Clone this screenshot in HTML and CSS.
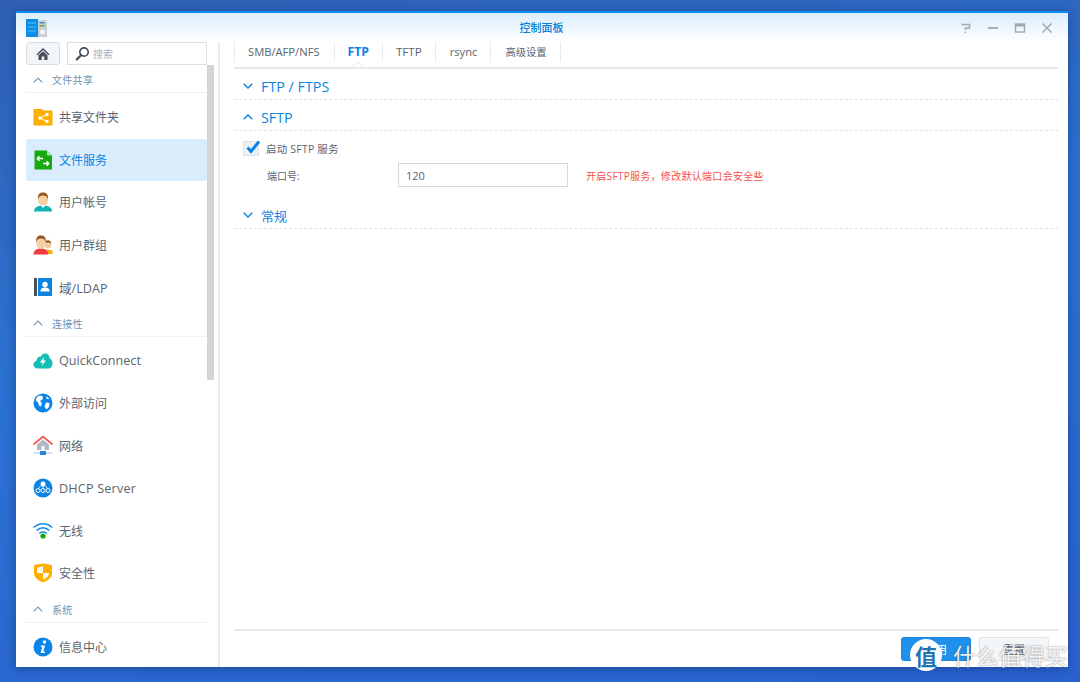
FILE: index.html
```html
<!DOCTYPE html>
<html lang="zh-CN">
<head>
<meta charset="utf-8">
<title>控制面板</title>
<link rel="stylesheet" href="styles.css">
</head>
<body>
<div class="window">
  <header class="titlebar">
    <svg class="app-icon" width="21" height="18" viewBox="0 0 21 18"><rect width="12" height="18" fill="#0a8fe6"/><path d="M2 4h8M2 8h8M2 12h8" stroke="#5cc0f5" stroke-width="1"/><rect x="12" y="1" width="9" height="17" fill="#c9ced3"/><rect x="13.500" y="3" width="5" height="1.500" fill="#3b8fd0"/><rect x="13.500" y="6" width="5" height="1.500" fill="#5aa84a"/><circle cx="16.500" cy="13" r="2.500" fill="#f2f4f6"/></svg>
    <h1 class="title">控制面板</h1>
    <div class="win-controls">
      <svg width="12" height="12" viewBox="0 0 12 12"><path d="M1.500 2.500H9.500V6H5.500V8M5.500 9.500V11" fill="none" stroke="#a3a8ad" stroke-width="1.600"/></svg>
      <svg width="12" height="12" viewBox="0 0 12 12"><path d="M1 6H11" stroke="#a3a8ad" stroke-width="1.800"/></svg>
      <svg width="12" height="12" viewBox="0 0 12 12"><rect x="1.500" y="2" width="9" height="8" fill="none" stroke="#a3a8ad" stroke-width="1.400"/><rect x="1" y="2" width="10" height="2.500" fill="#a3a8ad"/></svg>
      <svg width="12" height="12" viewBox="0 0 12 12"><path d="M1.500 1.500L10.500 10.500M10.500 1.500L1.500 10.500" stroke="#a3a8ad" stroke-width="1.500"/></svg>
    </div>
  </header>
  <div class="body">
    <aside class="sidebar">
      <div class="tools">
        <button class="home" type="button" aria-label="主页">
          <svg width="14" height="14" viewBox="0 0 14 14"><path d="M7 1L0.500 7.200L1.500 8.200L7 3L12.500 8.200L13.500 7.200Z" fill="#46505c"/><path d="M2.500 8.200L7 4.200L11.500 8.200V13H8.300V9.500H5.700V13H2.500Z" fill="#46505c"/></svg>
        </button>
        <div class="search">
          <svg width="15" height="15" viewBox="0 0 15 15"><circle cx="9" cy="6" r="4.200" fill="none" stroke="#46505c" stroke-width="1.700"/><path d="M6 9.200L1.800 13.400" stroke="#46505c" stroke-width="2.200" stroke-linecap="round"/></svg>
          <span>搜索</span>
        </div>
      </div>
      <div class="nav">
        <div class="nav-head"><svg class="chev-s" width="10" height="6" viewBox="0 0 10 6"><path d="M.7 5.300L5 1L9.300 5.300" fill="none" stroke="#6f97b8" stroke-width="1.100"/></svg>文件共享</div>
        <div class="nav-item"><svg width="20" height="18" viewBox="0 0 20 18"><path d="M1 1.500H9L10.500 3H19V17H1Z" fill="#ffb000" stroke="#f7a500"/><circle cx="7" cy="10" r="1.700" fill="#fff"/><circle cx="14" cy="6.500" r="1.700" fill="#fff"/><circle cx="14" cy="13.500" r="1.700" fill="#fff"/><path d="M7 10L14 6.500M7 10L14 13.500" stroke="#fff"/></svg>共享文件夹</div>
        <div class="nav-item active"><svg width="20" height="20" viewBox="0 0 20 20"><path d="M1.500 0.500H14L19 5.500V19.500H1.500Z" fill="#17a90f"/><path d="M14 .5V5.500H19Z" fill="#a6e39c"/><path d="M4 8.500H10M4 8.500L6.500 6.200M4 8.500L6.500 10.800M16 13.500H10M16 13.500L13.500 11.200M16 13.500L13.500 15.800" fill="none" stroke="#fff" stroke-width="1.500"/></svg>文件服务</div>
        <div class="nav-item"><svg width="20" height="20" viewBox="0 0 20 20"><path d="M1 19.500C1 15.500 4 14.500 7.500 13.500H12.500C16 14.500 19 15.500 19 19.500Z" fill="#11b3b5"/><ellipse cx="10" cy="7.500" rx="5" ry="6.500" fill="#f6cfa6"/><path d="M7.500 13H12.500L10 16Z" fill="#fff"/><path d="M5 7C4.500 2 7 .5 10 .5C13 .5 15.500 2 15 7C14 4.500 12.500 3.500 10 3.500C7.500 3.500 6 4.500 5 7Z" fill="#95561f"/></svg>用户帐号</div>
        <div class="nav-item"><svg width="20" height="20" viewBox="0 0 20 20"><ellipse cx="15" cy="9" rx="3.300" ry="4.500" fill="#f3c99e"/><path d="M12 8C12 4.500 18 4.500 18 8.500C16 7 14 7 12 8Z" fill="#6b4a25"/><path d="M13 14.500L19.500 15.500V19H13Z" fill="#f7a90c"/><path d="M0.500 19.500C.5 15.500 3 14.500 6 13.500H10C13 14.500 15 15.500 15 19.500Z" fill="#ed3b3b"/><ellipse cx="8" cy="7.500" rx="4.800" ry="6.300" fill="#f6cfa6"/><path d="M3.200 7C2.800 2 5 .5 8 .5C11 .5 13.200 2 12.800 7C12 4.500 10.500 3.500 8 3.500C5.500 3.500 4 4.500 3.200 7Z" fill="#95561f"/></svg>用户群组</div>
        <div class="nav-item latin"><svg width="20" height="20" viewBox="0 0 20 20"><rect x="1" y="1" width="3" height="18" fill="#46505c"/><rect x="5" y="1" width="14" height="18" fill="#0a84e0"/><circle cx="12" cy="7.500" r="2.700" fill="#fff"/><path d="M7.500 14.500C7.500 11.500 9 11 11 10.500H13C15 11 16.500 11.500 16.500 14.500Z" fill="#fff"/></svg>域/LDAP</div>
        <div class="nav-head"><svg class="chev-s" width="10" height="6" viewBox="0 0 10 6"><path d="M.7 5.300L5 1L9.300 5.300" fill="none" stroke="#6f97b8" stroke-width="1.100"/></svg>连接性</div>
        <div class="nav-item latin"><svg width="20" height="16" viewBox="0 0 20 16"><path d="M5 15.500C2 15.500 .5 13.500 .5 11.500C.5 9.500 2 8 3.500 7.800C4 4 6.500 3 8 3.500C9 1 11 .5 12.500 .5C15 .5 16.500 2.500 16.500 5C18.500 6 19.500 8.500 19.500 10.500C19.500 13.500 17.500 15.500 15 15.500Z" fill="#12bfb2"/><path d="M11 4L7 9.500H9.700L8.500 13L13 7.500H10.300Z" fill="#fff"/></svg>QuickConnect</div>
        <div class="nav-item"><svg width="20" height="20" viewBox="0 0 20 20"><circle cx="10" cy="10" r="9.500" fill="#0a84e8"/><path d="M7 2.500C4.500 3 3 5 2.800 7.500L5 9.500L6 12.500L8 13.500L9 10L7 8L9.500 6.500L10 3.500ZM13 9.500L16.500 10L16 14L13.500 16.500L11.500 13.500ZM13.500 3L16.500 6H13.500Z" fill="#fff"/></svg>外部访问</div>
        <div class="nav-item"><svg width="20" height="20" viewBox="0 0 20 20"><path d="M.5 8.500L10 .5L19.500 8.500" fill="none" stroke="#f4564e" stroke-width="1.700"/><path d="M4 8.500L10 3.500L16 8.500V14H4Z" fill="#b1bac4"/><rect x="8.500" y="10" width="3" height="4" fill="#fff"/><path d="M1 17H19" stroke="#9bc5ea" stroke-width="1"/><rect x="7" y="15" width="6" height="4" fill="#1e88e5"/></svg>网络</div>
        <div class="nav-item latin wide"><svg width="20" height="20" viewBox="0 0 20 20"><circle cx="10" cy="10" r="9.500" fill="#0d84e4"/><circle cx="10" cy="6" r="2.500" fill="#fff"/><circle cx="5" cy="12.500" r="2" fill="none" stroke="#fff"/><circle cx="10" cy="12.500" r="2" fill="none" stroke="#fff"/><circle cx="15" cy="12.500" r="2" fill="none" stroke="#fff"/><path d="M10 8V10.500M7.500 8L5.500 10.500M12.500 8L14.500 10.500" stroke="#fff" stroke-width=".8"/></svg>DHCP Server</div>
        <div class="nav-item"><svg width="20" height="16" viewBox="0 0 20 16"><path d="M.7 4.500C6 -.5 14 -.5 19.300 4.500M3.500 7.500C7.500 4 12.500 4 16.500 7.500M6.300 10.300C8.800 8.500 11.200 8.500 13.700 10.300" fill="none" stroke="#0f8ae8" stroke-width="1.500"/><circle cx="10" cy="13" r="2.600" fill="#18a80f"/></svg>无线</div>
        <div class="nav-item"><svg width="20" height="20" viewBox="0 0 20 20"><path d="M1 2L10 .5L19 2V10C19 15 14 18 10 19.500C6 18 1 15 1 10Z" fill="#ffae00"/><path d="M10 3.500V10H4V4.500ZM10 10H16V10.500C15.500 13.500 13 15.300 10 16.500Z" fill="#fff"/></svg>安全性</div>
        <div class="nav-head"><svg class="chev-s" width="10" height="6" viewBox="0 0 10 6"><path d="M.7 5.300L5 1L9.300 5.300" fill="none" stroke="#6f97b8" stroke-width="1.100"/></svg>系统</div>
        <div class="nav-item"><svg width="20" height="20" viewBox="0 0 20 20"><circle cx="10" cy="10" r="9.500" fill="#0a84e8"/><circle cx="11.500" cy="5" r="1.700" fill="#fff"/><path d="M8 8.500H12L10.300 14.500H12L11.500 16H7.500L9.300 10H7.700Z" fill="#fff"/></svg>信息中心</div>
      </div>
      <div class="scrollbar"></div>
    </aside>
    <main class="main">
      <nav class="tabs">
        <span class="tab tab-first">SMB/AFP/NFS</span>
        <span class="tab current">FTP<svg class="caret" width="10" height="5" viewBox="0 0 10 5"><path d="M0 5L5 0L10 5" fill="#fff" stroke="#e2e5e8"/></svg></span>
        <span class="tab tab-wide">TFTP</span>
        <span class="tab tab-pad">rsync</span>
        <span class="tab tab-pad tab-cjk">高级设置</span>
      </nav>
      <section class="panel">
        <h2 class="sec sec-latin"><svg width="10" height="6" viewBox="0 0 10 6"><path d="M.7 .7L5 5L9.300 .7" fill="none" stroke="#0a84e0" stroke-width="1.400"/></svg>FTP / FTPS</h2>
        <h2 class="sec sec-latin"><svg width="10" height="6" viewBox="0 0 10 6"><path d="M.7 5.300L5 1L9.300 5.300" fill="none" stroke="#0a84e0" stroke-width="1.400"/></svg>SFTP</h2>
        <div class="check-row">
          <span class="check"><svg width="17" height="16" viewBox="0 0 17 16"><path d="M3.500 7.500L7 11.500L15 1.500" fill="none" stroke="#0a84e8" stroke-width="3"/></svg></span>
          <span>启动 SFTP 服务</span>
        </div>
        <div class="port-row">
          <label class="port-label">端口号:</label>
          <div class="port-input">120</div>
          <span class="note">开启SFTP服务，修改默认端口会安全些</span>
        </div>
        <h2 class="sec sec-last"><svg width="10" height="6" viewBox="0 0 10 6"><path d="M.7 .7L5 5L9.300 .7" fill="none" stroke="#0a84e0" stroke-width="1.400"/></svg>常规</h2>
      </section>
      <footer class="footer">
        <button class="btn primary" type="button">应用</button>
        <button class="btn" type="button">重置</button>
      </footer>
    </main>
  </div>
</div>
<div class="watermark"><span class="wm-badge">值</span><span class="wm-text">什么值得买</span></div>
</body>
</html>
```
FILE: styles.css
```css
* { box-sizing: border-box; }
html, body { margin: 0; height: 100%; }
body {
  width: 1080px;
  height: 682px;
  overflow: hidden;
  padding: 11px 12px 15px 16px;
  background: linear-gradient(170deg, #2f60b4 0%, #2b72d2 45%, #2a62d0 100%);
  font-family: "Open Sans", "Noto Sans CJK SC", sans-serif;
  font-size: 12px;
  color: #5a6470;
}
.window {
  height: 656px;
  display: flex;
  flex-direction: column;
  background: #fff;
  border-top: 2px solid #0a8cf0;
  box-shadow: 0 2px 10px rgba(10, 40, 100, .45);
}
.titlebar {
  height: 29px;
  flex: none;
  display: flex;
  align-items: center;
  padding: 0 15px 0 10px;
  background: linear-gradient(#dcedfb, #fff);
}
.app-icon { flex: none; }
.title {
  flex: 1;
  margin: 0 0 2px;
  text-align: center;
  font-size: 11px;
  font-weight: 500;
  color: #0a7fd8;
  padding-left: 76px;
}
.win-controls { display: flex; gap: 15px; }
.body { flex: 1; min-height: 0; display: flex; }
.sidebar {
  position: relative;
  width: 204px;
  flex: none;
  padding-left: 10px;
  border-right: 2px solid #e8ebee;
  overflow: hidden;
}
.tools { display: flex; gap: 7px; width: 181px; height: 23px; }
.home {
  width: 34px;
  height: 23px;
  padding: 0;
  display: flex;
  align-items: center;
  justify-content: center;
  background: #f3f6f9;
  border: 1px solid #d7dde4;
  border-radius: 3px;
}
.search {
  flex: 1;
  display: flex;
  align-items: center;
  gap: 3px;
  padding-left: 7px;
  border: 1px solid #d9dfe6;
  color: #a9afb6;
  font-size: 10px;
}
.nav { width: 181px; }
.nav-head {
  height: 28px;
  margin-bottom: 3px;
  padding: 2px 0 0 7px;
  display: flex;
  align-items: center;
  gap: 9px;
  border-bottom: 1px solid #eef0f2;
  font-size: 10px;
  letter-spacing: .3px;
  color: #6b93b5;
}
.nav-item {
  height: 42.5px;
  display: flex;
  align-items: center;
  padding-left: 7px;
  border-radius: 3px;
  font-size: 12px;
  position: relative;
}
.nav-item.latin { font-size: 12.600px; }
.nav-item.wide { letter-spacing: .2px; }
.nav-item svg { margin-right: 6px; flex: none; width: 20px; }
.nav-item.active { background: #d9edfd; color: #0a84e0; }
.scrollbar {
  position: absolute;
  left: 191px;
  top: 23px;
  width: 7px;
  height: 315px;
  background: #d3d4d6;
}
.main {
  flex: 1;
  min-width: 0;
  display: flex;
  flex-direction: column;
  padding: 0 10px 6px 14px;
}
.tabs {
  height: 27px;
  flex: none;
  display: flex;
  align-items: flex-start;
  border-bottom: 2px solid #e6e9ec;
}
.tab {
  height: 20px;
  padding: 0 13px 2px;
  display: flex;
  align-items: center;
  border-right: 1px solid #e8ebee;
  font-size: 11.200px;
}
.tab-first { border-left: 1px solid #e8ebee; padding-right: 14px; }
.tab-wide { font-size: 11.600px; }
.tab-pad { padding-left: 14px; }
.tab-cjk { font-size: 10.300px; }
.tab.current { color: #0a84e0; font-weight: 700; font-size: 12.200px; position: relative; }
.caret {
  position: absolute;
  left: 50%;
  bottom: -5px;
  margin-left: -5px;
}
.panel { flex: 1; min-height: 0; padding-top: 6px; }
.sec {
  margin: 0 0 6px;
  height: 25px;
  display: flex;
  align-items: center;
  gap: 8px;
  padding: 0 0 2px 9px;
  border-bottom: 1px dashed #dbe4ec;
  color: #0a84e0;
  font-size: 13px;
  font-weight: 400;
}
.sec-latin { font-size: 14.300px; }
.sec-last { margin-top: 17px; }
.check-row {
  height: 24px;
  margin-top: -1px;
  display: flex;
  align-items: center;
  gap: 7px;
  padding-left: 9px;
  font-size: 10.500px;
  letter-spacing: .2px;
}
.check {
  width: 16px;
  height: 15px;
  background: #eef1f4;
  border: 1px solid #dfe3e8;
  display: flex;
}
.check svg { flex: none; margin: -2px 0 0 0; }
.port-row {
  display: flex;
  align-items: center;
  height: 24px;
  margin-top: 3px;
  padding-left: 33px;
  font-size: 10px;
}
.port-label { width: 131px; }
.port-input {
  width: 170px;
  height: 24px;
  padding-left: 7px;
  display: flex;
  align-items: center;
  border: 1px solid #ced9e3;
  font-size: 11px;
}
.note { margin-left: 18px; color: #f4524d; font-size: 10px; letter-spacing: .3px; }
.footer {
  flex: none;
  height: 32px;
  border-top: 2px solid #e8eaec;
  display: flex;
  justify-content: flex-end;
  align-items: flex-end;
  gap: 8px;
  padding-right: 9px;
}
.btn {
  width: 70px;
  height: 24px;
  padding: 0;
  border: 1px solid #dfe4ea;
  border-radius: 3px;
  background: #f3f6f9;
  color: #5a6470;
  font: 11px "Open Sans", "Noto Sans CJK SC", sans-serif;
}
.btn.primary { background: #1f90ec; border-color: #1a84dc; color: #fff; }
.watermark {
  position: absolute;
  left: 910px;
  top: 639px;
  display: flex;
  align-items: center;
  gap: 11px;
}
.wm-badge {
  width: 32px;
  height: 32px;
  border-radius: 50%;
  background: #fff;
  color: #1f74b4;
  display: flex;
  align-items: center;
  justify-content: center;
  font-size: 22px;
  font-weight: 700;
  font-family: "Noto Sans CJK SC", sans-serif;
}
.wm-text {
  color: rgba(255, 255, 255, .9);
  font-size: 23px;
  line-height: 32px;
  font-family: "Noto Sans CJK SC", sans-serif;
  text-shadow: 0 0 2px rgba(70, 70, 70, .7);
  white-space: nowrap;
}
```
